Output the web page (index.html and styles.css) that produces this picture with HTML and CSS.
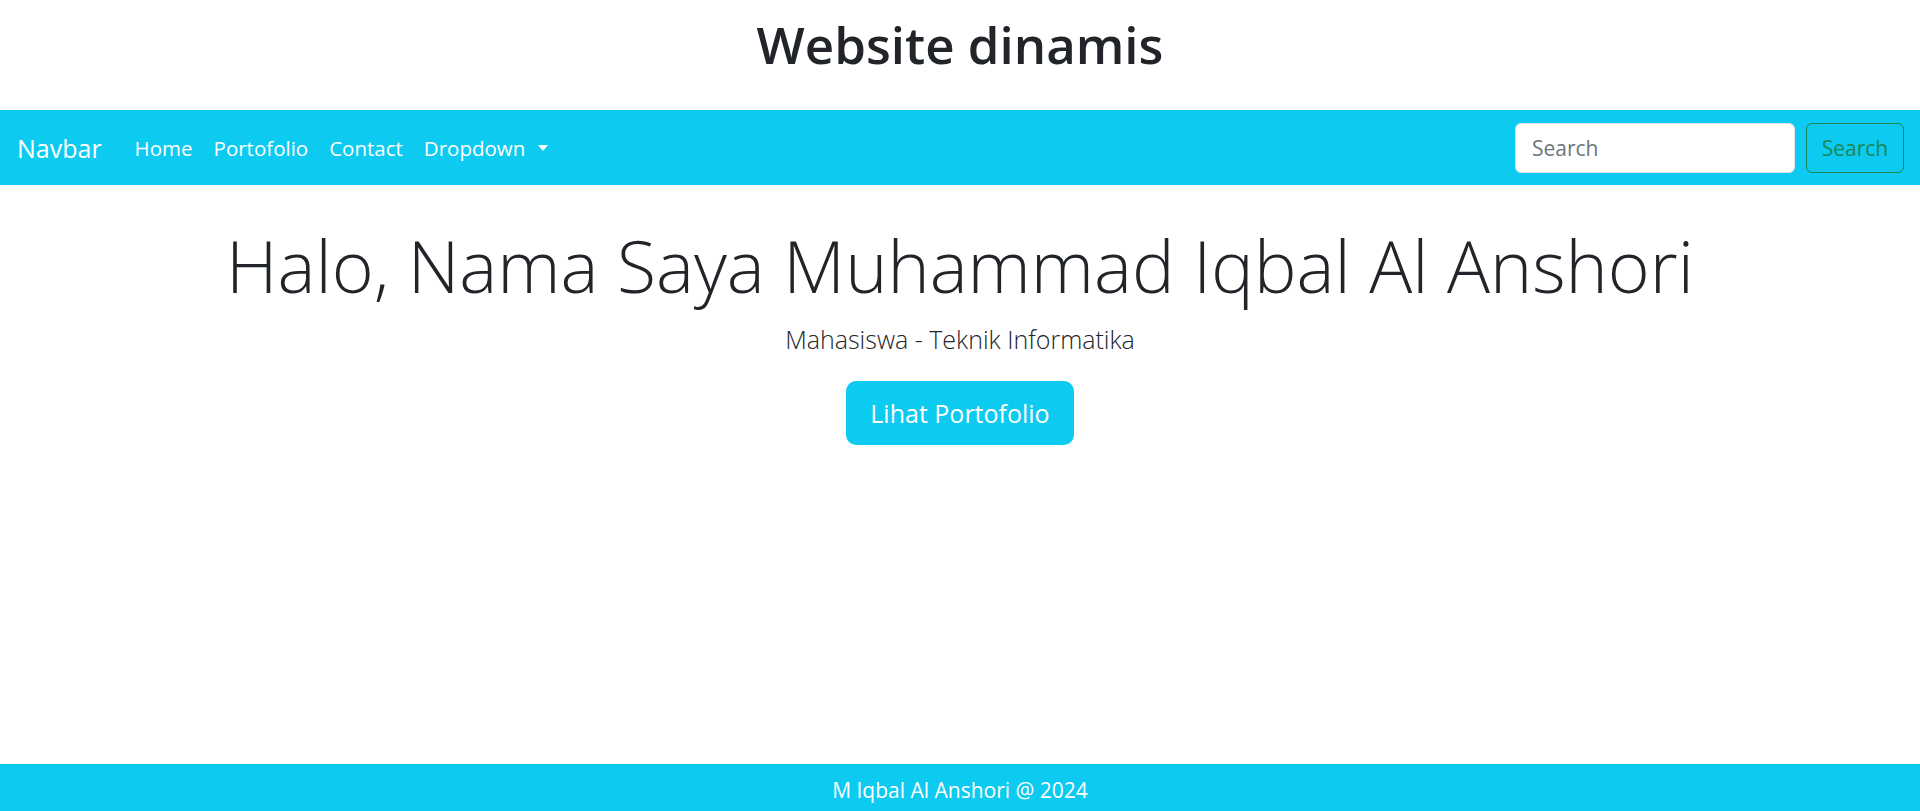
FILE: index.html
```html
<!DOCTYPE html>
<html lang="id">
<head>
<meta charset="utf-8">
<title>Website dinamis</title>
<link rel="stylesheet" href="styles.css">
</head>
<body>
<header class="site-header">
  <h1 class="site-title">Website dinamis</h1>
</header>
<nav class="navbar">
  <div class="nav-left">
    <a class="brand" href="#">Navbar</a>
    <ul class="nav-links">
      <li><a href="#">Home</a></li>
      <li><a href="#">Portofolio</a></li>
      <li><a href="#">Contact</a></li>
      <li><a href="#" class="dropdown-toggle">Dropdown<span class="caret"></span></a></li>
    </ul>
  </div>
  <form class="search-form">
    <input class="search-input" type="search" placeholder="Search">
    <button class="search-btn" type="button">Search</button>
  </form>
</nav>
<main class="hero">
  <h2 class="hero-title">Halo, Nama Saya Muhammad Iqbal Al Anshori</h2>
  <p class="hero-lead">Mahasiswa - Teknik Informatika</p>
  <a class="hero-btn" href="#">Lihat Portofolio</a>
</main>
<footer class="site-footer">M Iqbal Al Anshori @ 2024</footer>
</body>
</html>
```
FILE: styles.css
```css
* { box-sizing: border-box; }
html, body { margin: 0; padding: 0; }
body {
  font-family: "Open Sans", "Noto Sans", sans-serif;
  color: #212529;
  background: #fff;
  min-height: 811px;
  display: flex;
  flex-direction: column;
}
.site-header {
  height: 110px;
  display: flex;
  justify-content: center;
}
.site-title {
  margin: 0;
  padding-top: 14px;
  font-size: 51px;
  font-weight: 600;
  line-height: 1.2;
}
.navbar {
  background: #0dcaf0;
  height: 75px;
  padding: 0 16px 0 17px;
  display: flex;
  align-items: center;
  justify-content: space-between;
}
.nav-left { display: flex; align-items: center; }
.brand {
  color: #fff;
  text-decoration: none;
  font-size: 25px;
  margin-right: 33px;
}
.nav-links {
  list-style: none;
  margin: 0;
  padding: 0;
  display: flex;
  gap: 21px;
}
.nav-links a {
  color: #fff;
  text-decoration: none;
  font-size: 20.5px;
  display: flex;
  align-items: center;
}
.caret {
  display: inline-block;
  width: 0;
  height: 0;
  margin-left: 13px;
  border-left: 5px solid transparent;
  border-right: 5px solid transparent;
  border-top: 6px solid #fff;
}
.search-form { display: flex; gap: 11px; }
.search-input {
  width: 280px;
  height: 50px;
  border: 1px solid #dee2e6;
  border-radius: 6px;
  padding: 0 16px;
  font-family: inherit;
  font-size: 21px;
  color: #212529;
  background: #fff;
}
.search-input::placeholder { color: #6c757d; }
.search-btn {
  width: 98px;
  height: 50px;
  border: 1px solid #198754;
  border-radius: 6px;
  background: transparent;
  color: #198754;
  font-family: inherit;
  font-size: 21px;
  padding: 0;
}
.hero {
  flex: 1;
  display: flex;
  flex-direction: column;
  align-items: center;
  padding-top: 38px;
}
.hero-title {
  margin: 0;
  font-size: 71.6px;
  font-weight: 300;
  line-height: 1.2;
}
.hero-lead {
  margin: 12px 0 0;
  font-size: 25px;
  font-weight: 300;
  line-height: 1.5;
}
.hero-btn {
  margin-top: 23px;
  background: #0dcaf0;
  color: #fff;
  text-decoration: none;
  font-size: 25px;
  height: 64px;
  width: 228px;
  border-radius: 10px;
  display: flex;
  align-items: center;
  justify-content: center;
}
.site-footer {
  background: #0dcaf0;
  color: #fff;
  height: 47px;
  display: flex;
  align-items: center;
  justify-content: center;
  font-size: 21px;
  padding-top: 4px;
}
```
